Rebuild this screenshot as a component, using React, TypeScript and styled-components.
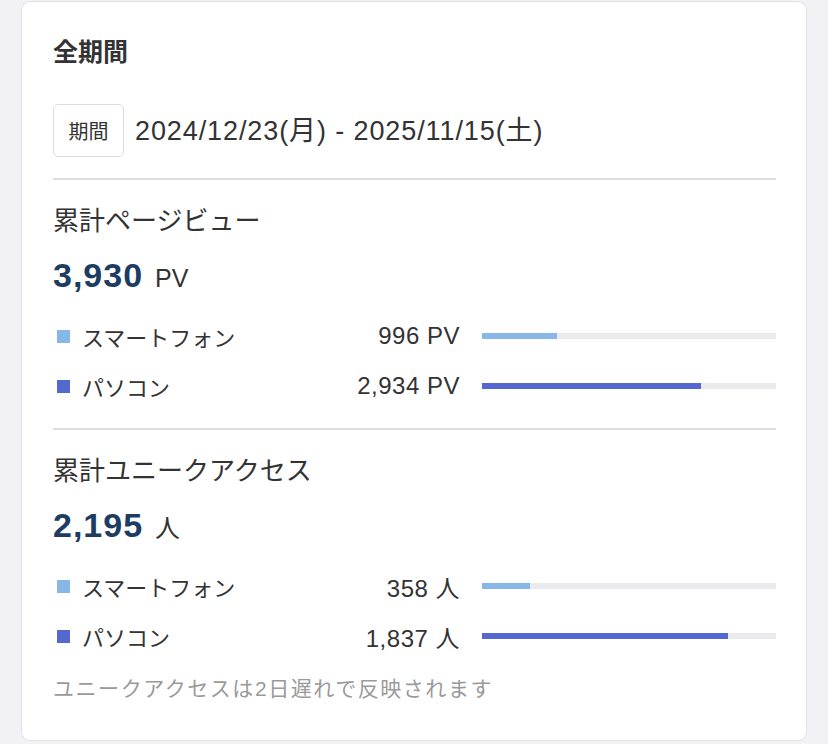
import React from "react";
import styled, { createGlobalStyle } from "styled-components";

const Global = createGlobalStyle`
  html, body { margin: 0; padding: 0; background: #f2f2f4; }
  body {
    font-family: "Liberation Sans", "Noto Sans CJK JP", sans-serif;
    color: #333;
  }
`;

const Page = styled.div`
  padding: 1px 21px 0 21px;
  width: 828px;
  box-sizing: border-box;
`;

const Card = styled.div`
  background: #fff;
  border: 1px solid #e2e2e4;
  border-radius: 9px;
  padding: 36px 30px 37px 31px;
  box-sizing: border-box;
  height: 740px;
`;

const Title = styled.h2`
  margin: 0;
  font-size: 25px;
  line-height: 28px;
  font-weight: 700;
  color: #333;
`;

const PeriodRow = styled.div`
  display: flex;
  align-items: center;
  gap: 11px;
  margin-top: 38px;
  padding-bottom: 21px;
  border-bottom: 2px solid #dedede;
`;

const Badge = styled.div`
  width: 71px;
  height: 53px;
  box-sizing: border-box;
  border: 1px solid #dcdcdc;
  border-radius: 5px;
  display: flex;
  align-items: center;
  justify-content: center;
  font-size: 20px;
  color: #333;
`;

const DateText = styled.div`
  font-size: 27px;
  color: #333;
  letter-spacing: 0.9px;
  padding-bottom: 5px;
`;

const Section = styled.section<{ $last?: boolean }>`
  padding-top: 26px;
  padding-bottom: ${(p) => (p.$last ? "0" : "17px")};
  border-bottom: ${(p) => (p.$last ? "none" : "2px solid #dedede")};
`;

const Heading = styled.div`
  font-size: 26px;
  line-height: 30px;
  color: #333;
`;

const Total = styled.div`
  margin-top: 21px;
  height: 36px;
  display: flex;
  align-items: baseline;
  gap: 12px;
`;

const TotalNum = styled.span`
  font-size: 34px;
  line-height: 36px;
  font-weight: 700;
  color: #1d3c63;
  letter-spacing: 1px;
`;

const TotalUnit = styled.span`
  font-size: 25px;
  color: #333;
`;

const Rows = styled.div`
  margin-top: 18px;
  display: flex;
  flex-direction: column;
`;

const Row = styled.div`
  display: flex;
  align-items: center;
  height: 50px;
`;

const Legend = styled.div`
  flex: 1;
  display: flex;
  align-items: center;
  gap: 12px;
  padding-left: 4px;
  font-size: 22px;
  color: #333;
`;

const Swatch = styled.span<{ $color: string }>`
  width: 13px;
  height: 13px;
  background: ${(p) => p.$color};
  display: inline-block;
`;

const Value = styled.div`
  font-size: 24px;
  color: #333;
  text-align: right;
  letter-spacing: 0.5px;
`;

const Track = styled.div`
  width: 294px;
  height: 6px;
  margin-left: 22px;
  background: #ebebee;
`;

const Fill = styled.div<{ $color: string }>`
  height: 100%;
  background: ${(p) => p.$color};
`;

const Note = styled.div`
  margin-top: 15px;
  font-size: 21px;
  line-height: 26px;
  color: #9a9a9a;
  letter-spacing: 1.55px;
`;

const LIGHT = "#86b7e8";
const DARK = "#5568cf";

type Item = { label: string; value: number; color: string };

function BarRow({ item, total, unit }: { item: Item; total: number; unit: string }) {
  return (
    <Row>
      <Legend>
        <Swatch $color={item.color} />
        {item.label}
      </Legend>
      <Value>
        {item.value.toLocaleString("en-US")} {unit}
      </Value>
      <Track>
        <Fill $color={item.color} style={{ width: `${(item.value / total) * 100}%` }} />
      </Track>
    </Row>
  );
}

function StatSection({
  heading,
  total,
  unit,
  items,
  last,
  children,
}: {
  heading: string;
  total: number;
  unit: string;
  items: Item[];
  last?: boolean;
  children?: React.ReactNode;
}) {
  return (
    <Section $last={last}>
      <Heading>{heading}</Heading>
      <Total>
        <TotalNum>{total.toLocaleString("en-US")}</TotalNum>
        <TotalUnit>{unit}</TotalUnit>
      </Total>
      <Rows>
        {items.map((it) => (
          <BarRow key={it.label} item={it} total={total} unit={unit} />
        ))}
      </Rows>
      {children}
    </Section>
  );
}

export default function App() {
  return (
    <Page>
      <Global />
      <Card>
        <Title>全期間</Title>
        <PeriodRow>
          <Badge>期間</Badge>
          <DateText>2024/12/23(月) - 2025/11/15(土)</DateText>
        </PeriodRow>
        <StatSection
          heading="累計ページビュー"
          total={3930}
          unit="PV"
          items={[
            { label: "スマートフォン", value: 996, color: LIGHT },
            { label: "パソコン", value: 2934, color: DARK },
          ]}
        />
        <StatSection
          heading="累計ユニークアクセス"
          total={2195}
          unit="人"
          last
          items={[
            { label: "スマートフォン", value: 358, color: LIGHT },
            { label: "パソコン", value: 1837, color: DARK },
          ]}
        >
          <Note>ユニークアクセスは2日遅れで反映されます</Note>
        </StatSection>
      </Card>
    </Page>
  );
}
